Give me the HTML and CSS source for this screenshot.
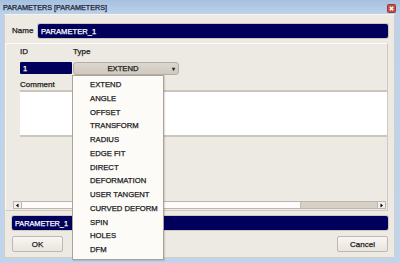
FILE: index.html
```html
<!DOCTYPE html>
<html>
<head>
<meta charset="utf-8">
<link rel="stylesheet" href="styles.css">
</head>
<body>
<div class="window">
  <div class="titlebar">
    <span class="title">PARAMETERS [PARAMETERS]</span>
    <span class="close"><svg width="9" height="9" viewBox="0 0 9 9"><rect x="0.5" y="0.5" width="8" height="8" rx="1" fill="#c44f45" stroke="#9a3a33"/><path d="M2.8 2.8 L6.2 6.2 M6.2 2.8 L2.8 6.2" stroke="#fff" stroke-width="1.4"/></svg></span>
  </div>
  <div class="content">
    <div class="name-row">
      <span class="label name-label">Name</span>
      <div class="field name-field">PARAMETER_1</div>
    </div>
    <div class="panel">
      <div class="head-row">
        <span class="label id-label">ID</span>
        <span class="label">Type</span>
      </div>
      <div class="input-row">
        <div class="field id-field">1</div>
        <div class="combo"><span class="combo-text">EXTEND</span><span class="arrow">&#9662;</span></div>
      </div>
      <div class="label comment-label">Comment</div>
      <div class="textarea"></div>
      <div class="spacer"></div>
      <div class="hscroll">
        <span class="sbtn"><svg width="5" height="5" viewBox="0 0 5 5"><path d="M3.5 0.5 L1 2.5 L3.5 4.5 Z" fill="#000"/></svg></span>
        <span class="track"></span>
        <span class="thumb"></span>
        <span class="sbtn"><svg width="5" height="5" viewBox="0 0 5 5"><path d="M1.5 0.5 L4 2.5 L1.5 4.5 Z" fill="#000"/></svg></span>
      </div>
    </div>
    <div class="field nav-field">PARAMETER_1</div>
    <div class="buttons">
      <button class="btn">OK</button>
      <button class="btn">Cancel</button>
    </div>
    <ul class="dropdown">
      <li>EXTEND</li>
      <li>ANGLE</li>
      <li>OFFSET</li>
      <li>TRANSFORM</li>
      <li>RADIUS</li>
      <li>EDGE FIT</li>
      <li>DIRECT</li>
      <li>DEFORMATION</li>
      <li>USER TANGENT</li>
      <li>CURVED DEFORM</li>
      <li>SPIN</li>
      <li>HOLES</li>
      <li>DFM</li>
    </ul>
  </div>
</div>
</body>
</html>
```
FILE: styles.css
```css
* { box-sizing: border-box; }
html, body { margin: 0; padding: 0; }
body {
  width: 400px;
  height: 263px;
  overflow: hidden;
  font-family: "Liberation Sans", Arial, sans-serif;
  color: #1c1c1c;
  background: #bcd2ea;
  -webkit-text-stroke: 0.25px currentColor;
}
.window {
  width: 400px;
  height: 263px;
  display: flex;
  flex-direction: column;
  background: linear-gradient(to bottom, #a5c0de 0px, #bdd2ea 14px, #c0d5ec 100%);
}
.titlebar {
  height: 14px;
  display: flex;
  align-items: center;
  justify-content: space-between;
  padding: 0 4px 0 3px;
}
.title {
  font-size: 7.2px;
  color: #1a2230;
  line-height: 14px;
  padding-top: 1px;
}
.close {
  display: flex;
  margin-top: 3px;
  -webkit-text-stroke: 0;
}
.content {
  position: relative;
  margin: 0 5px 5px 4px;
  height: 244px;
  background: #ede9e3;
  border: 1px solid #d4cec5;
  border-top-color: #f7f5f1;
  display: flex;
  flex-direction: column;
  padding: 9px 6px 0 0;
}
.label {
  font-size: 8px;
  line-height: 10px;
  color: #1a1a1a;
}
.name-row {
  display: flex;
  align-items: center;
  height: 14px;
  padding-left: 7px;
}
.name-label { width: 26px; }
.field {
  background: #00005c;
  color: #fff;
  font-size: 7.6px;
  border-radius: 2px;
  box-shadow: 0 0 0 1px #cfc8bd;
  display: flex;
  align-items: center;
  padding-left: 3px;
}
.name-field {
  flex: 1;
  height: 14px;
}
.panel {
  margin-top: 5px;
  height: 168px;
  border-top: 1px solid #fbfaf8;
  border-left: 1px solid #fbfaf8;
  border-right: 1px solid #cfc9c0;
  border-bottom: 1px solid #cfc9c0;
  display: flex;
  flex-direction: column;
  padding: 3px 0 1px 0;
}
.head-row {
  display: flex;
  padding-left: 14px;
}
.id-label { width: 53px; }
.input-row {
  display: flex;
  margin-top: 5px;
  padding-left: 14px;
  height: 13px;
}
.id-field {
  width: 52px;
  height: 12px;
  border-radius: 1px;
  box-shadow: none;
}
.combo {
  margin-left: 1px;
  width: 106px;
  height: 13px;
  background: linear-gradient(#dcd7cf, #cfc9c0);
  border: 1px solid #b5aea4;
  border-radius: 3px;
  display: flex;
  align-items: center;
  font-size: 7.7px;
}
.combo-text {
  flex: 1;
  text-align: center;
  padding-left: 4px;
}
.arrow {
  font-size: 6px;
  width: 10px;
  text-align: center;
}
.comment-label {
  margin-top: 5px;
  padding-left: 14px;
}
.textarea {
  margin-left: 14px;
  height: 47px;
  background: #fff;
  border-top: 2px solid #cbc5bb;
  border-bottom: 2px solid #cbc5bb;
}
.spacer { flex: 1; }
.hscroll {
  display: flex;
  margin-left: 7px;
  margin-right: 1px;
  height: 8px;
  border: 1px solid #bdb6ac;
  background: #fff;
}
.sbtn {
  width: 8px;
  background: #f2efea;
  border-right: 1px solid #bdb6ac;
  display: flex;
  align-items: center;
  justify-content: center;
}
.sbtn:last-child {
  border-right: none;
  border-left: 1px solid #bdb6ac;
}
.track {
  flex: 1;
  background: #fdfcfb;
}
.thumb {
  width: 77px;
  background: #d6d0c7;
  border-left: 1px solid #c4bdb3;
}
.nav-field {
  margin-top: 5px;
  margin-left: 7px;
  height: 14px;
  font-size: 7.3px;
}
.buttons {
  display: flex;
  justify-content: space-between;
  margin-top: 6px;
  padding-left: 7px;
}
.btn {
  width: 51px;
  height: 16px;
  padding: 0;
  font-family: "Liberation Sans", Arial, sans-serif;
  font-size: 8px;
  color: #1a1a1a;
  -webkit-text-stroke: 0.25px #1a1a1a;
  background: linear-gradient(#f8f6f3, #e9e5df);
  border: 1px solid #bfb8ae;
  border-radius: 2px;
}
.dropdown {
  position: absolute;
  left: 67px;
  top: 60px;
  width: 92px;
  margin: 0;
  padding: 2px 0 2px 0;
  list-style: none;
  background: #fcfbf8;
  border: 1px solid #a9a39a;
  box-shadow: 1px 1px 1px rgba(0,0,0,0.12);
}
.dropdown li {
  height: 13.75px;
  line-height: 13.75px;
  font-size: 7.7px;
  padding-left: 17px;
  color: #1a1a1a;
}
```
